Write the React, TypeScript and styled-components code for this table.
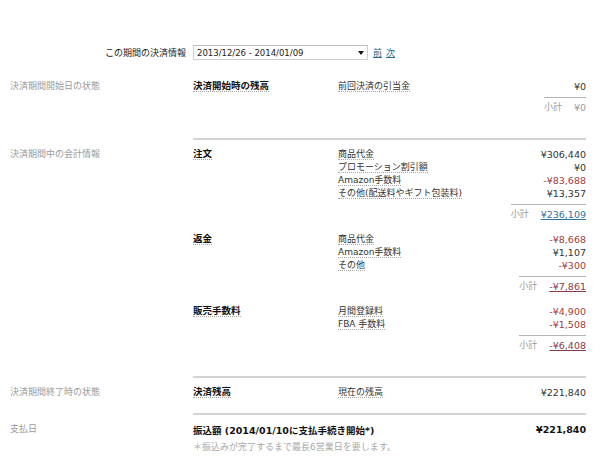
import React from "react";
import styled, { createGlobalStyle } from "styled-components";

const Global = createGlobalStyle`
  html, body { margin: 0; padding: 0; background: #fff; }
  body {
    font-family: "DejaVu Sans", "Noto Sans CJK JP", sans-serif;
    font-size: 9px;
    color: #333;
  }
`;

const Page = styled.div`
  width: 600px;
  box-sizing: border-box;
  padding: 45px 14px 20px 10px;
`;

const Header = styled.div`
  display: flex;
  align-items: center;
  height: 15px;
  margin-bottom: 20px;
`;

const HeaderLabel = styled.div`
  width: 183px;
  box-sizing: border-box;
  padding-right: 7px;
  text-align: right;
  color: #222;
`;

const SelectBox = styled.div`
  width: 175px;
  height: 15px;
  box-sizing: border-box;
  border: 1px solid #cfcfcf;
  border-top-color: #bdbdbd;
  display: flex;
  align-items: center;
  justify-content: space-between;
  padding: 0 3px;
  font-size: 8.5px;
  color: #222;
`;

const NavLinks = styled.div`
  display: flex;
  gap: 4px;
  margin-left: 5px;
`;

const NavLink = styled.a`
  color: #236b8e;
  text-decoration: underline;
  cursor: pointer;
`;

const Section = styled.div<{ $space: number }>`
  display: flex;
  margin-top: ${(p) => p.$space}px;
`;

const SideLabel = styled.div<{ $ruled?: boolean }>`
  width: 183px;
  flex-shrink: 0;
  color: #9a9a9a;
  line-height: 13px;
  padding-top: ${(p) => (p.$ruled ? 10 : 0)}px;
`;

const Content = styled.div<{ $ruled?: boolean }>`
  flex: 1;
  border-top: ${(p) => (p.$ruled ? "2px solid #d4d4d4" : "none")};
  padding-top: ${(p) => (p.$ruled ? 8 : 0)}px;
`;

const Group = styled.div`
  display: flex;
  align-items: flex-start;
  & + & {
    margin-top: 12px;
  }
`;

const GroupTitle = styled.div`
  width: 145px;
  flex-shrink: 0;
  height: 13px;
  display: flex;
  align-items: center;
  font-weight: bold;
  font-size: 9.5px;
  color: #111;
`;

const Dotted = styled.span`
  display: inline-block;
  line-height: 10px;
  border-bottom: 1px dotted #a8a8a8;
`;

const Items = styled.div`
  flex: 1;
  display: flex;
  flex-direction: column;
`;

const ItemRow = styled.div`
  display: flex;
  justify-content: space-between;
  align-items: center;
  height: 13px;
`;

type Tone = "pos" | "neg" | "zero";

const Amount = styled.span<{ $tone: Tone }>`
  font-size: 9.5px;
  color: ${(p) => (p.$tone === "neg" ? "#a23d3d" : "#333")};
`;

const Subtotal = styled.div`
  display: flex;
  justify-content: flex-end;
  margin-top: 4px;
`;

const SubtotalBox = styled.div`
  display: inline-flex;
  gap: 12px;
  border-top: 1px solid #b4b4b4;
  padding-top: 3px;
  line-height: 13px;
`;

const SubLabel = styled.span`
  color: #9a9a9a;
`;

const SubAmount = styled.span<{ $tone: Tone }>`
  font-size: 9.5px;
  color: ${(p) =>
    p.$tone === "neg" ? "#8c3a48" : p.$tone === "pos" ? "#2f73a0" : "#9a9a9a"};
  text-decoration: ${(p) => (p.$tone === "zero" ? "none" : "underline")};
`;

const TotalRow = styled.div`
  display: flex;
  justify-content: space-between;
  align-items: center;
  height: 13px;
  font-weight: bold;
  font-size: 9.5px;
  color: #111;
`;

const Note = styled.div`
  margin-top: 5px;
  line-height: 13px;
  color: #a8a8a8;
`;

type Item = { label: string; amount: string };
type GroupData = { title: string; items: Item[]; subtotal?: string };

const tone = (v: string): Tone =>
  v.startsWith("-") ? "neg" : v === "¥0" ? "zero" : "pos";

const Arrow = () => (
  <svg width="6" height="4" viewBox="0 0 6 4">
    <path d="M0 0 L6 0 L3 4 Z" fill="#111" />
  </svg>
);

const GroupView: React.FC<{ g: GroupData }> = ({ g }) => (
  <Group>
    <GroupTitle>
      <Dotted>{g.title}</Dotted>
    </GroupTitle>
    <Items>
      {g.items.map((it, i) => (
        <ItemRow key={i}>
          <Dotted>{it.label}</Dotted>
          <Amount $tone={tone(it.amount)}>{it.amount}</Amount>
        </ItemRow>
      ))}
      {g.subtotal && (
        <Subtotal>
          <SubtotalBox>
            <SubLabel>小計</SubLabel>
            <SubAmount $tone={tone(g.subtotal)}>{g.subtotal}</SubAmount>
          </SubtotalBox>
        </Subtotal>
      )}
    </Items>
  </Group>
);

const startGroups: GroupData[] = [
  {
    title: "決済開始時の残高",
    items: [{ label: "前回決済の引当金", amount: "¥0" }],
    subtotal: "¥0",
  },
];

const periodGroups: GroupData[] = [
  {
    title: "注文",
    items: [
      { label: "商品代金", amount: "¥306,440" },
      { label: "プロモーション割引額", amount: "¥0" },
      { label: "Amazon手数料", amount: "-¥83,688" },
      { label: "その他(配送料やギフト包装料)", amount: "¥13,357" },
    ],
    subtotal: "¥236,109",
  },
  {
    title: "返金",
    items: [
      { label: "商品代金", amount: "-¥8,668" },
      { label: "Amazon手数料", amount: "¥1,107" },
      { label: "その他", amount: "-¥300" },
    ],
    subtotal: "-¥7,861",
  },
  {
    title: "販売手数料",
    items: [
      { label: "月間登録料", amount: "-¥4,900" },
      { label: "FBA 手数料", amount: "-¥1,508" },
    ],
    subtotal: "-¥6,408",
  },
];

const endGroups: GroupData[] = [
  {
    title: "決済残高",
    items: [{ label: "現在の残高", amount: "¥221,840" }],
  },
];

export default function App() {
  return (
    <>
      <Global />
      <Page>
        <Header>
          <HeaderLabel>この期間の決済情報</HeaderLabel>
          <SelectBox>
            <span>2013/12/26 - 2014/01/09</span>
            <Arrow />
          </SelectBox>
          <NavLinks>
            <NavLink>前</NavLink>
            <NavLink>次</NavLink>
          </NavLinks>
        </Header>

        <Section $space={0}>
          <SideLabel>決済期間開始日の状態</SideLabel>
          <Content>
            {startGroups.map((g, i) => (
              <GroupView key={i} g={g} />
            ))}
          </Content>
        </Section>

        <Section $space={24}>
          <SideLabel $ruled>決済期間中の会計情報</SideLabel>
          <Content $ruled>
            {periodGroups.map((g, i) => (
              <GroupView key={i} g={g} />
            ))}
          </Content>
        </Section>

        <Section $space={24}>
          <SideLabel $ruled>決済期間終了時の状態</SideLabel>
          <Content $ruled>
            {endGroups.map((g, i) => (
              <GroupView key={i} g={g} />
            ))}
          </Content>
        </Section>

        <Section $space={14}>
          <SideLabel $ruled>支払日</SideLabel>
          <Content $ruled>
            <TotalRow>
              <span>振込額 (2014/01/10に支払手続き開始*)</span>
              <span>¥221,840</span>
            </TotalRow>
            <Note>＊振込みが完了するまで最長6営業日を要します。</Note>
          </Content>
        </Section>
      </Page>
    </>
  );
}
